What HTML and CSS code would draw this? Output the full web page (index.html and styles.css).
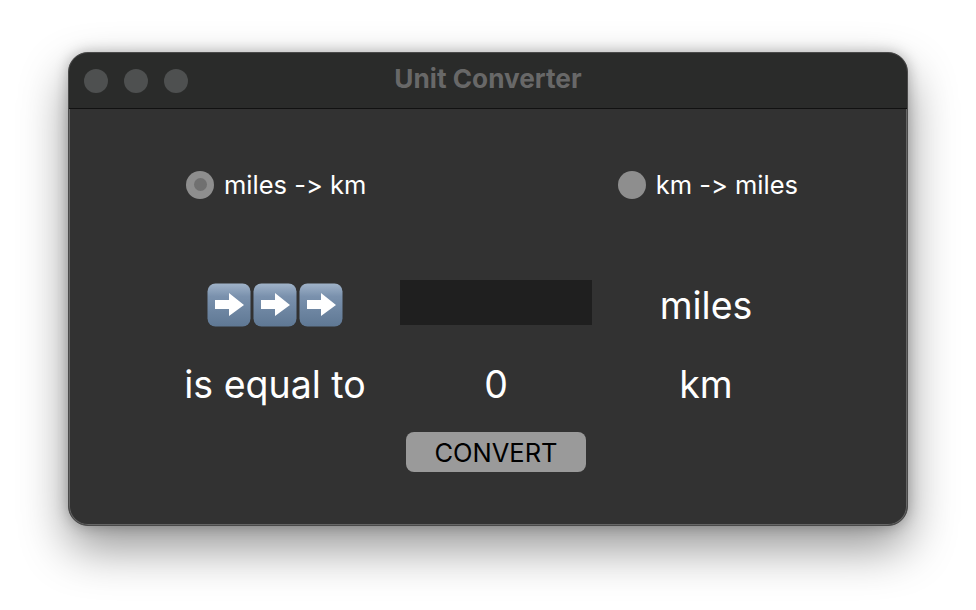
FILE: index.html
```html
<!DOCTYPE html>
<html lang="en">
<head>
    <meta charset="UTF-8">
    <title>Unit Converter</title>
    <link rel="stylesheet" href="styles.css">
</head>
<body>
    <svg class="defs" width="0" height="0">
        <defs>
            <linearGradient id="tile" x1="0" y1="0" x2="0" y2="1">
                <stop offset="0" stop-color="#a0b3c9"/>
                <stop offset="0.3" stop-color="#7a91ad"/>
                <stop offset="1" stop-color="#5f7894"/>
            </linearGradient>
            <symbol id="arrow" viewBox="0 0 44 44">
                <rect x="0.5" y="0.5" width="43" height="43" rx="8" fill="url(#tile)"/>
                <path d="M8 17H22V10L37 22L22 33V26H8Z" fill="#fff"/>
            </symbol>
        </defs>
    </svg>
    <div class="window">
        <div class="titlebar">
            <div class="lights">
                <span class="light"></span>
                <span class="light"></span>
                <span class="light"></span>
            </div>
            <div class="title">Unit Converter</div>
        </div>
        <div class="content">
            <div class="radios">
                <label class="radio"><span class="dot selected"></span>miles -&gt; km</label>
                <label class="radio"><span class="dot"></span>km -&gt; miles</label>
            </div>
            <div class="row input-row">
                <div class="arrows">
                    <svg class="tile"><use href="#arrow"/></svg>
                    <svg class="tile"><use href="#arrow"/></svg>
                    <svg class="tile"><use href="#arrow"/></svg>
                </div>
                <div class="field"></div>
                <div class="unit">miles</div>
            </div>
            <div class="row result-row">
                <div>is equal to</div>
                <div>0</div>
                <div class="unit">km</div>
            </div>
            <div class="row button-row">
                <button class="convert">CONVERT</button>
            </div>
        </div>
    </div>
</body>
</html>
```

FILE: styles.css
```css
html, body {
    height: 100%;
}
body {
    margin: 0;
    padding: 52px 68px 0;
    box-sizing: border-box;
    overflow: hidden;
    background-color: #fff;
    font-family: Inter, "Liberation Sans", sans-serif;
    font-feature-settings: "calt" 0, "liga" 0;
}
.defs {
    position: absolute;
}
.window {
    height: 474px;
    box-sizing: border-box;
    background-color: #323232;
    border: 1px solid #4a4a4a;
    border-radius: 20px;
    overflow: hidden;
    box-shadow: inset 0 0 0 1px #666, 0 22px 48px rgba(0, 0, 0, 0.42), 0 0 14px rgba(0, 0, 0, 0.25);
}
.titlebar {
    position: relative;
    height: 56px;
    box-sizing: border-box;
    display: flex;
    align-items: center;
    padding-left: 15px;
    background-color: #2a2b2a;
    border-bottom: 1px solid #111;
}
.lights {
    display: flex;
    gap: 16px;
}
.light {
    width: 24px;
    height: 24px;
    border-radius: 50%;
    background-color: #4e5050;
}
.title {
    position: absolute;
    left: 0;
    right: 0;
    top: 10px;
    text-align: center;
    font-size: 26.2px;
    font-weight: 700;
    color: #686868;
}
.content {
    padding-top: 60px;
    color: #fff;
}
.radios {
    display: flex;
    justify-content: space-between;
    padding: 0 109px 0 117px;
}
.radio {
    display: flex;
    align-items: center;
    gap: 10px;
    font-size: 25.5px;
}
.dot {
    width: 28px;
    height: 28px;
    border-radius: 50%;
    background-color: #8e8e8e;
    display: flex;
    align-items: center;
    justify-content: center;
}
.dot.selected::after {
    content: "";
    width: 13px;
    height: 13px;
    border-radius: 50%;
    background-color: #707070;
}
.row {
    display: grid;
    grid-template-columns: 206px 208px 184px;
    column-gap: 14px;
    padding-left: 103px;
    justify-items: center;
    align-items: center;
    font-size: 37.5px;
}
.input-row {
    margin-top: 80px;
    height: 46px;
    align-items: start;
}
.input-row .unit {
    margin-top: 3px;
}
.result-row {
    margin-top: 36px;
    height: 44px;
}
.button-row {
    margin-top: 26px;
}
.arrows {
    display: flex;
    gap: 2px;
    margin-top: 3px;
}
.tile {
    width: 44px;
    height: 44px;
}
.field {
    width: 192px;
    height: 45px;
    background-color: #1f1f1f;
}
.convert {
    grid-column: 2;
    width: 180px;
    height: 40px;
    padding: 0;
    border: none;
    border-radius: 8px;
    background-color: #9a9a9a;
    color: #000;
    font-family: inherit;
    font-size: 25.5px;
}
```
